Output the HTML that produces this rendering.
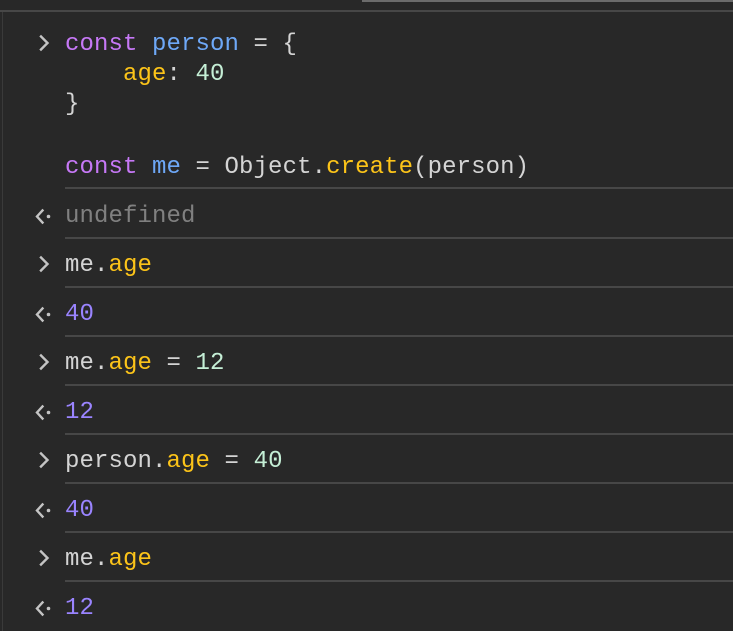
<!DOCTYPE html>
<html><head><meta charset="utf-8"><style>
html,body{margin:0;padding:0;background:#282828;width:733px;height:631px;overflow:hidden;position:relative}
.t{position:absolute;left:65px;height:30px;line-height:30px;font-family:"Liberation Mono",monospace;font-size:24px;color:#d4d4d4;white-space:pre;letter-spacing:0.1px}
.s{position:absolute;left:65px;right:0;height:2px;background:#474747}
.k{color:#c678f6}.v{color:#6ea8f7}.p{color:#fcc419}.n{color:#c5efd6}.r{color:#9a84ff}.u{color:#808080}
</style></head><body>
<div style="position:absolute;left:0;top:10px;width:733px;height:2px;background:#474747"></div>
<div style="position:absolute;left:362px;top:0;width:371px;height:2px;background:#6b6b6b"></div>
<div style="position:absolute;left:2px;top:12px;width:1px;height:619px;background:#3a3a3a"></div>

<svg style="position:absolute;left:0;top:0" width="733" height="631" viewBox="0 0 733 631">
<g fill="none" stroke="#c4c4c4" stroke-width="2.4" stroke-linecap="square">
<path d="M41 36.5 L47.5 43 L41 49.5"/>
<path d="M41 257.5 L47.5 264 L41 270.5"/>
<path d="M41 355.5 L47.5 362 L41 368.5"/>
<path d="M41 453.5 L47.5 460 L41 466.5"/>
<path d="M41 551.5 L47.5 558 L41 564.5"/>
<path d="M42.5 210.5 L37 216.5 L42.5 222.5"/>
<path d="M42.5 308.5 L37 314.5 L42.5 320.5"/>
<path d="M42.5 406.5 L37 412.5 L42.5 418.5"/>
<path d="M42.5 504.5 L37 510.5 L42.5 516.5"/>
<path d="M42.5 602.5 L37 608.5 L42.5 614.5"/>
</g>
<g fill="#c4c4c4">
<circle cx="48.5" cy="216.5" r="1.8"/><circle cx="48.5" cy="314.5" r="1.8"/><circle cx="48.5" cy="412.5" r="1.8"/><circle cx="48.5" cy="510.5" r="1.8"/><circle cx="48.5" cy="608.5" r="1.8"/>
</g>
</svg>

<div class="t" style="top:30px"><span class="k">const</span> <span class="v">person</span> = {</div>
<div class="t" style="top:60px">    <span class="p">age</span>: <span class="n">40</span></div>
<div class="t" style="top:90px">}</div>
<div class="t" style="top:153px"><span class="k">const</span> <span class="v">me</span> = Object.<span class="p">create</span>(person)</div>
<div class="s" style="top:187px"></div>
<div class="t u" style="top:202px">undefined</div>
<div class="s" style="top:237px"></div>
<div class="t" style="top:251px">me.<span class="p">age</span></div>
<div class="s" style="top:286px"></div>
<div class="t r" style="top:300px">40</div>
<div class="s" style="top:335px"></div>
<div class="t" style="top:349px">me.<span class="p">age</span> = <span class="n">12</span></div>
<div class="s" style="top:384px"></div>
<div class="t r" style="top:398px">12</div>
<div class="s" style="top:433px"></div>
<div class="t" style="top:447px">person.<span class="p">age</span> = <span class="n">40</span></div>
<div class="s" style="top:482px"></div>
<div class="t r" style="top:496px">40</div>
<div class="s" style="top:531px"></div>
<div class="t" style="top:545px">me.<span class="p">age</span></div>
<div class="s" style="top:580px"></div>
<div class="t r" style="top:594px">12</div>
</body></html>
